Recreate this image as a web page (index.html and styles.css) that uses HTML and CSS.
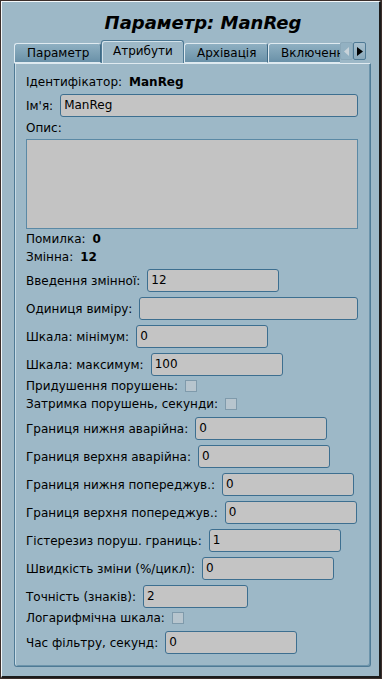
FILE: index.html
```html
<!DOCTYPE html>
<html>
<head>
<meta charset="utf-8">
<link rel="stylesheet" href="styles.css">
</head>
<body>
<div class="window">
  <div class="title">Параметр: ManReg</div>
  <div class="tabwidget">
    <div class="tabbar">
      <div class="tabs">
        <div class="tab t1">Параметр</div>
        <div class="tab active t2">Атрибути</div>
        <div class="tab t3">Архівація</div>
        <div class="tab t4">Включення</div>
      </div>
      <div class="arrows">
        <div class="arrow dis"><svg width="6" height="9" viewBox="0 0 6 9"><path d="M5 0 L0 4.5 L5 9Z" fill="#c8d3da"/></svg></div>
        <div class="arrow"><svg width="6" height="9" viewBox="0 0 6 9"><path d="M0 0 L6 4.5 L0 9Z" fill="#000"/></svg></div>
      </div>
    </div>
    <div class="panel">
      <div class="row text r-id"><span class="lbl">Ідентифікатор:</span><b>ManReg</b></div>
      <div class="row field r-name"><span class="lbl">Ім'я:</span><div class="inp grow">ManReg</div></div>
      <div class="row text r-opis"><span class="lbl">Опис:</span></div>
      <div class="textarea"></div>
      <div class="row text r-err"><span class="lbl">Помилка:</span><b>0</b></div>
      <div class="row text"><span class="lbl">Змінна:</span><b>12</b></div>
      <div class="row field r-first"><span class="lbl">Введення змінної:</span><div class="inp">12</div></div>
      <div class="row field"><span class="lbl">Одиниця виміру:</span><div class="inp grow"></div></div>
      <div class="row field"><span class="lbl">Шкала: мінімум:</span><div class="inp">0</div></div>
      <div class="row field"><span class="lbl">Шкала: максимум:</span><div class="inp">100</div></div>
      <div class="row text r-chk"><span class="lbl">Придушення порушень:</span><span class="chk"></span></div>
      <div class="row text"><span class="lbl">Затримка порушень, секунди:</span><span class="chk"></span></div>
      <div class="row field r-after"><span class="lbl">Границя нижня аварійна:</span><div class="inp">0</div></div>
      <div class="row field"><span class="lbl">Границя верхня аварійна:</span><div class="inp">0</div></div>
      <div class="row field"><span class="lbl">Границя нижня попереджув.:</span><div class="inp">0</div></div>
      <div class="row field"><span class="lbl">Границя верхня попереджув.:</span><div class="inp">0</div></div>
      <div class="row field"><span class="lbl">Гістерезиз поруш. границь:</span><div class="inp">1</div></div>
      <div class="row field"><span class="lbl">Швидкість зміни (%/цикл):</span><div class="inp">0</div></div>
      <div class="row field"><span class="lbl">Точність (знаків):</span><div class="inp short">2</div></div>
      <div class="row text r-chk"><span class="lbl">Логарифмічна шкала:</span><span class="chk"></span></div>
      <div class="row field r-after"><span class="lbl">Час фільтру, секунд:</span><div class="inp">0</div></div>
    </div>
  </div>
</div>
</body>
</html>
```

FILE: styles.css
```css
* { box-sizing: border-box; }
html, body { margin: 0; padding: 0; }
body {
  width: 382px;
  height: 679px;
  background: #3b2e2b;
  padding: 1px 1px 1px 1px;
  font-family: "DejaVu Sans", sans-serif;
  font-size: 12px;
  color: #000;
}
.window {
  width: 380px;
  height: 677px;
  background: #9db8c7;
  border-top: 1px solid #f4f8fa;
  border-left: 1px solid #f4f8fa;
  border-right: 2px solid #1c1c1c;
  border-bottom: 2px solid #1c1c1c;
  display: flex;
  flex-direction: column;
}
.title {
  height: 38px;
  padding-top: 9px;
  padding-left: 25px;
  text-align: center;
  font-weight: bold;
  font-style: italic;
  font-size: 18px;
  line-height: 24px;
}
.tabwidget {
  margin-left: 12px;
  margin-right: 8px;
  display: flex;
  flex-direction: column;
}
.tabbar {
  height: 23px;
  display: flex;
  align-items: flex-end;
  position: relative;
}
.tabs {
  display: flex;
  align-items: flex-end;
  width: 326px;
  overflow: hidden;
  white-space: nowrap;
}
.tab {
  height: 20px;
  line-height: 19px;
  padding-left: 12px;
  flex: none;
  border-top: 1px solid #dfeaf0;
  border-left: 1px solid #dfeaf0;
  border-right: 1px solid #3f6a85;
  border-radius: 3px 3px 0 0;
  background: linear-gradient(#8fb0c2, #6a91a8);
  border-bottom: 1px solid #dfeaf0;
}
.t1 { width: 87px; }
.t2 { width: 83px; }
.t3 { width: 84px; }
.t4 { width: 90px; }
.tab.active {
  height: 23px;
  line-height: 21px;
  background: #9db8c7;
  border-bottom: none;
  border-top: 1px solid #4f7a95;
  border-left: 1px solid #4f7a95;
  border-right: 1px solid #4f7a95;
  box-shadow: inset 1px 1px 0 #d4e3eb;
  padding-left: 11px;
}
.arrows {
  display: flex;
  align-items: flex-start;
  height: 23px;
  padding-top: 2px;
}
.arrow {
  width: 13px;
  height: 18px;
  display: flex;
  align-items: center;
  justify-content: center;
  background: linear-gradient(#a8c0ce, #8aa9bb);
  border: 1px solid #4f7a95;
  border-radius: 2px;
}
.arrow.dis {
  border-color: #8aa7b8;
  background: #93b1c2;
}
.panel {
  height: 604px;
  border: 1px solid #4f7a95;
  border-top: 1px solid #dfeaf0;
  border-radius: 0 0 3px 3px;
  box-shadow: inset 1px 0 0 #c8dbe5, inset -1px -1px 0 #6c94ab;
  padding: 8px 12px 0 11px;
  display: flex;
  flex-direction: column;
}
.row {
  display: flex;
  align-items: center;
  gap: 7px;
  flex: none;
}
.row.text { height: 18px; }
.row.field { height: 23px; margin-top: 5px; }
.lbl { white-space: nowrap; }
.row b { font-weight: bold; }
.r-id { margin-top: 1px; }
.r-name { margin-top: 3px !important; }
.r-opis { margin-top: 2px; }
.textarea {
  margin-top: 2px;
  height: 90px;
  background: #c3c3c3;
  border: 1px solid #5b89a5;
  flex: none;
}
.r-err { margin-top: 1px; }
.r-first { margin-top: 3px !important; }
.r-chk { margin-top: 1px; }
.r-after { margin-top: 4px !important; }
.inp {
  width: 132px;
  height: 23px;
  background: #c4c4c4;
  border: 1px solid #3d6f90;
  border-radius: 3px;
  padding-left: 3px;
  line-height: 21px;
  flex: none;
}
.inp.grow { flex: 1; width: auto; }
.inp.short { width: 105px; }
.chk {
  width: 12px;
  height: 12px;
  background: #b7c5ce;
  border: 1px solid #7f9aab;
  flex: none;
}
```
